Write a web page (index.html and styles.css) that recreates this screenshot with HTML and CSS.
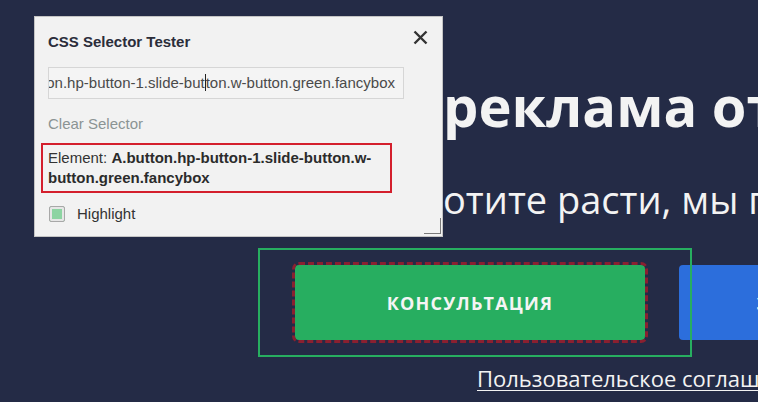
FILE: index.html
```html
<!DOCTYPE html>
<html lang="ru">
<head>
<meta charset="utf-8">
<title>CSS Selector Tester</title>
<link rel="stylesheet" href="styles.css">
</head>
<body>
<div class="page">
  <main class="hero">
    <h1 class="hero-title">реклама от Google</h1>
    <p class="hero-sub">отите расти, мы говорим</p>
    <div class="cta-row">
      <a class="btn btn-green" href="#">КОНСУЛЬТАЦИЯ</a>
      <a class="btn btn-blue" href="#">ЗАКАЗАТЬ ЗВОНОК</a>
      <div class="highlight-box"></div>
    </div>
    <a class="terms" href="#">Пользовательское соглашение</a>
  </main>

  <section class="tester">
    <div class="tester-head">
      <h2 class="tester-title">CSS Selector Tester</h2>
      <button class="tester-close" aria-label="Close">
        <svg width="15" height="15" viewBox="0 0 15 15"><path d="M1.5 1.5 L13.5 13.5 M13.5 1.5 L1.5 13.5" stroke="#333" stroke-width="2.4" stroke-linecap="butt" fill="none"/></svg>
      </button>
    </div>
    <div class="tester-input"><span class="tester-input-text">a.button.hp-button-1.slide-but<span class="caret"></span>ton.w-button.green.fancybox</span></div>
    <a class="tester-clear" href="#">Clear Selector</a>
    <div class="tester-element"><span>Element: </span><b>A.button.hp-button-1.slide-button.w-button.green.fancybox</b></div>
    <label class="tester-highlight"><span class="tester-check"></span>Highlight</label>
    <span class="tester-resize"></span>
  </section>
</div>
</body>
</html>
```

FILE: styles.css
```css
html, body {
  margin: 0;
  padding: 0;
}
body {
  width: 758px;
  height: 402px;
  overflow: hidden;
  background: #242b46;
}
.page {
  position: relative;
  width: 758px;
  height: 402px;
  overflow: hidden;
}

/* hero */
.hero {
  display: flex;
  flex-direction: column;
  align-items: flex-start;
  font-family: "Open Sans", "Noto Sans", sans-serif;
  color: #f3f3f3;
  white-space: nowrap;
}
.hero-title {
  margin: 73px 0 0 443px;
  font-size: 56px;
  line-height: 64px;
  font-weight: 700;
}
.hero-sub {
  margin: 40px 0 0 443px;
  font-size: 38px;
  line-height: 44px;
  font-weight: 400;
}
.cta-row {
  position: relative;
  display: flex;
  gap: 34px;
  margin: 44px 0 0 295px;
}
.btn {
  display: flex;
  align-items: center;
  justify-content: center;
  height: 75px;
  border-radius: 4px;
  color: #f5f5f5;
  text-decoration: none;
  font-size: 18px;
  font-weight: 700;
  letter-spacing: 1.2px;
  flex-shrink: 0;
}
.btn-green {
  width: 350px;
  background: #27ae60;
  outline: 3px dashed #8a2030;
  outline-offset: 0;
}
.btn-blue {
  width: 350px;
  background: #2c6edc;
}
.highlight-box {
  position: absolute;
  left: -37px;
  top: -17px;
  width: 430px;
  height: 105px;
  border: 2px solid #27ae60;
  pointer-events: none;
}
.terms {
  margin: 24px 0 0 477px;
  font-size: 22px;
  line-height: 28px;
  color: #f3f3f3;
  text-decoration: underline;
  text-underline-offset: 3px;
  text-decoration-thickness: 1px;
}

/* tester panel */
.tester {
  position: absolute;
  left: 34px;
  top: 16px;
  width: 381px;
  height: 193px;
  padding: 13px;
  background: #f2f2f2;
  border: 1px solid #c4c4c4;
  font-family: "Liberation Sans", Arial, sans-serif;
  font-size: 15px;
  color: #333;
}
.tester-head {
  display: flex;
  justify-content: space-between;
  align-items: flex-start;
  height: 37px;
}
.tester-title {
  margin: 3px 0 0 0;
  font-size: 15px;
  line-height: 18px;
  font-weight: 700;
  color: #2b2d3a;
}
.tester-close {
  margin: 0 1px 0 0;
  padding: 0;
  border: 0;
  background: none;
  width: 15px;
  height: 15px;
  display: block;
}
.tester-input {
  display: flex;
  justify-content: flex-end;
  width: 346px;
  height: 30px;
  padding: 0 8px 0 0;
  border: 1px solid #d6d6d6;
  background: #f4f4f4;
  overflow: hidden;
  align-items: center;
  white-space: nowrap;
}
.tester-input-text {
  color: #4a4a4a;
  line-height: 18px;
  flex-shrink: 0;
}
.caret {
  display: inline-block;
  width: 1px;
  height: 17px;
  background: #222;
  vertical-align: -3px;
}
.tester-clear {
  display: block;
  margin-top: 16px;
  line-height: 18px;
  color: #8b9494;
  text-decoration: none;
}
.tester-element {
  margin: 10px 0 0 -7px;
  width: 339px;
  padding: 3px 3px 3px 5px;
  border: 2px solid #d41f2d;
  line-height: 20px;
  color: #333;
}
.tester-element b {
  color: #2b2b2b;
}
.tester-highlight {
  display: flex;
  align-items: center;
  gap: 12px;
  margin: 12px 0 0 1px;
  line-height: 18px;
  color: #333;
}
.tester-check {
  display: block;
  width: 14px;
  height: 14px;
  border: 1px solid #a8a8a8;
  border-radius: 2px;
  background: #8dd4a2;
  box-shadow: inset 0 0 0 2px #e6e6e6;
}
.tester-resize {
  position: absolute;
  right: 1px;
  bottom: 2px;
  width: 16px;
  height: 15px;
  border-right: 1px solid #7a7a7a;
  border-bottom: 1px solid #7a7a7a;
}
```
